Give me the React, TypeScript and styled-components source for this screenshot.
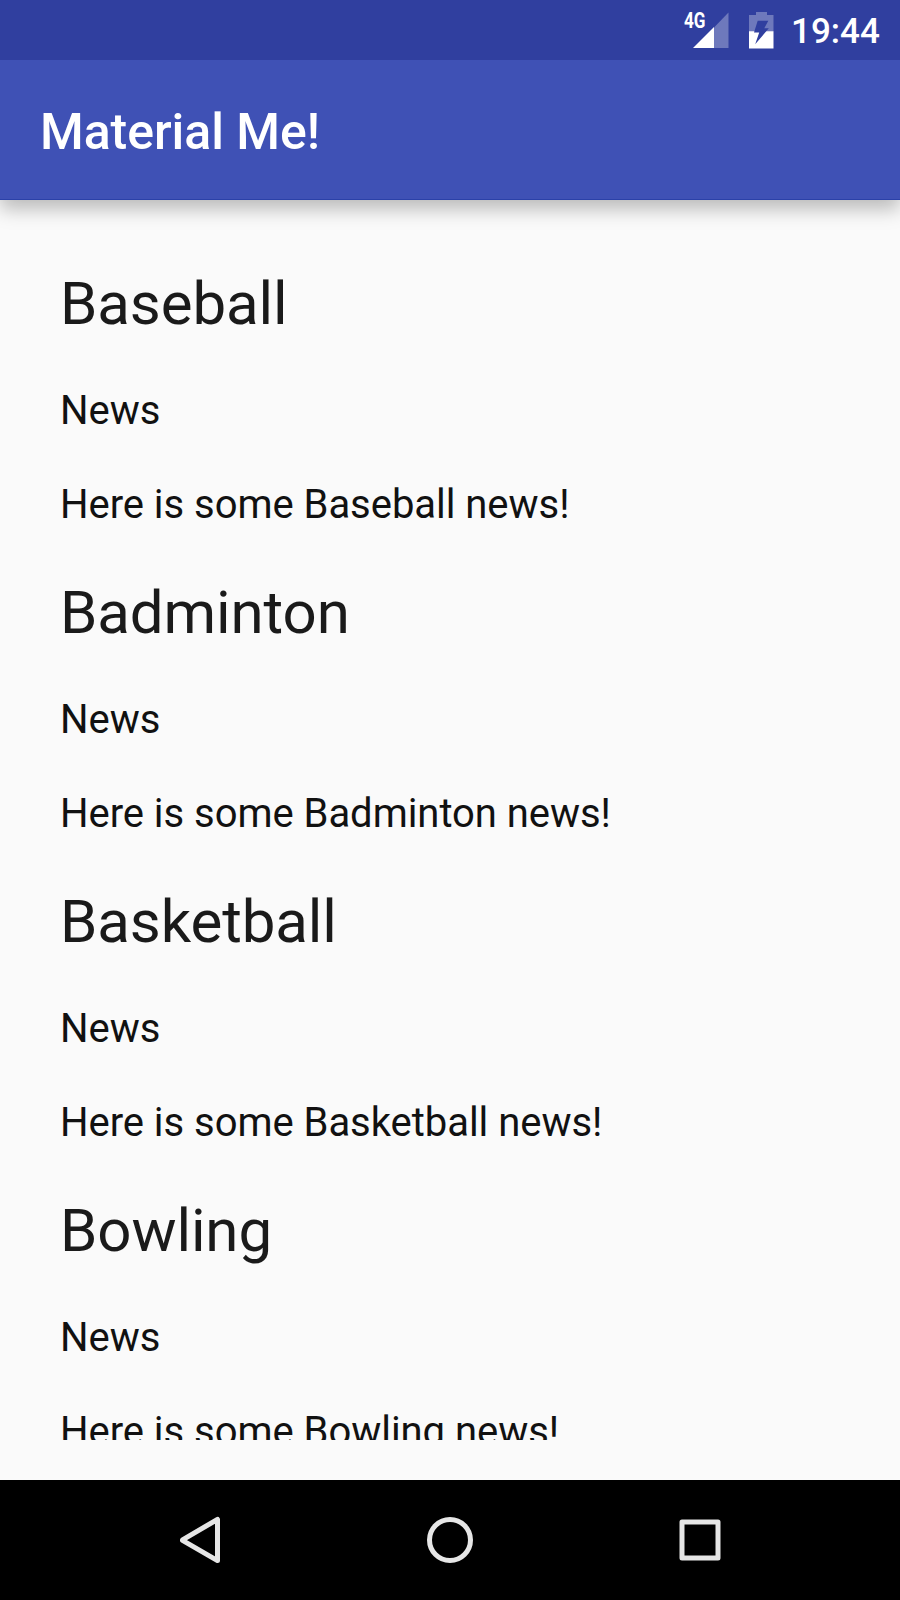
import React from 'react';
import styled, { createGlobalStyle } from 'styled-components';

const Global = createGlobalStyle`
  * { box-sizing: border-box; }
  body { margin: 0; background: #fafafa; }
`;
const Screen = styled.div`
  width: 900px;
  height: 1600px;
  display: flex;
  flex-direction: column;
  background: #fafafa;
  color: #1a1a1a;
  font-family: Roboto, sans-serif;
  overflow: hidden;
`;
const StatusBar = styled.header`
  height: 60px;
  flex: none;
  background: #303f9f;
  color: #fff;
  display: flex;
  align-items: center;
  justify-content: flex-end;
  padding-right: 20px;
  z-index: 2;
`;
const StatusIcon = styled.svg<{ $gap: number }>`
  display: block;
  flex: none;
  margin-right: ${(p) => p.$gap}px;
`;
const Clock = styled.span`
  width: 89px;
  font-size: 35px;
  line-height: 58px;
  font-weight: 500;
  padding-top: 4px;
`;
const AppBar = styled.div`
  height: 140px;
  flex: none;
  background: #3f51b5;
  color: #fff;
  display: flex;
  align-items: center;
  padding: 6px 0 0 40px;
  border-bottom: 1px solid #2b41a8;
  box-shadow: 0 9px 18px rgba(0, 0, 0, 0.26);
  z-index: 1;
`;
const Title = styled.h1`
  margin: 0;
  font-size: 50px;
  line-height: 59px;
  font-weight: 500;
  letter-spacing: -0.04px;
`;
const List = styled.main`
  height: 1240px;
  flex: none;
  margin: 0 40px;
  padding-top: 40px;
  overflow: hidden;
`;
const Sport = styled.section`
  height: 309px;
  padding: 22px 20px 0;
`;
const Heading = styled.h2`
  margin: 0;
  font-size: 60px;
  line-height: 84px;
  font-weight: 400;
  letter-spacing: -0.1px;
`;
const Line = styled.p<{ $top: number }>`
  margin: 0;
  font-size: 40px;
  line-height: 54px;
  padding-top: ${(p) => p.$top}px;
  letter-spacing: -0.04px;
  color: #111;
`;
const Nav = styled.nav`
  height: 120px;
  flex: none;
  margin-top: auto;
  background: #000;
  display: flex;
  justify-content: center;
  align-items: center;
`;
const NavButton = styled.button`
  width: 250px;
  height: 120px;
  padding: 0;
  border: 0;
  background: none;
  display: flex;
  justify-content: center;
  align-items: center;
`;
const NavIcon = styled.svg`
  display: block;
  fill: none;
  stroke: #e6e6e6;
  stroke-width: 5;
  stroke-linejoin: round;
`;

const sports = ['Baseball', 'Badminton', 'Basketball', 'Bowling'];

export default function App() {
  return (
    <Screen>
      <Global />
      <StatusBar>
        <StatusIcon $gap={20} width="46" height="60" viewBox="0 0 46 60">
          <text x="1" y="27.7" fill="#fff" fontFamily="Roboto, sans-serif" fontSize="21.5" fontWeight="700" textLength="21.5" lengthAdjust="spacingAndGlyphs">4G</text>
          <path d="M31 27.5V48H45.5V12.5Z" fill="#fff" fillOpacity=".3" />
          <path d="M10 48L31 27V48Z" fill="#fff" />
        </StatusIcon>
        <StatusIcon $gap={17} width="25" height="60" viewBox="0 0 25 60">
          <path d="M7 12H18V15H24.5V31.2H0V15H7Z" fill="#fff" fillOpacity=".3" />
          <path d="M0 31.2H24.5V48.5H0Z" fill="#fff" />
          <path d="M8.7 20.7H19.3L15.3 28.2H19.8L6.2 44.3L10.2 32.4H5Z" fill="#303f9f" />
        </StatusIcon>
        <Clock>19:44</Clock>
      </StatusBar>
      <AppBar><Title>Material Me!</Title></AppBar>
      <List>
        {sports.map((s) => (
          <Sport key={s}>
            <Heading>{s}</Heading>
            <Line $top={38}>News</Line>
            <Line $top={40}>Here is some {s} news!</Line>
          </Sport>
        ))}
      </List>
      <Nav>
        <NavButton aria-label="Back">
          <NavIcon width="50" height="50" viewBox="0 0 50 50"><path d="M42.5 4.4V45.6L7.5 25.4V24.8Z" /></NavIcon>
        </NavButton>
        <NavButton aria-label="Home">
          <NavIcon width="50" height="50" viewBox="0 0 50 50"><circle cx="25" cy="25" r="20.5" /></NavIcon>
        </NavButton>
        <NavButton aria-label="Overview">
          <NavIcon width="50" height="50" viewBox="0 0 50 50"><rect x="7" y="7" width="36" height="36" /></NavIcon>
        </NavButton>
      </Nav>
    </Screen>
  );
}
